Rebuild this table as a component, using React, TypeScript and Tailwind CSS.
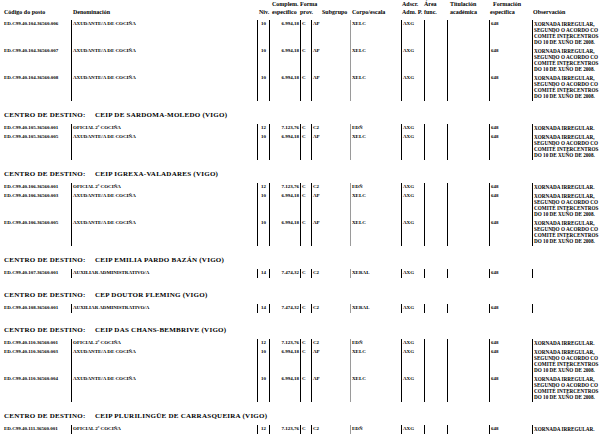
import React from 'react';

type Posto = {
  code: string;
  den: string;
  niv: string;
  comp: string;
  sub: string;
  corpo: string;
  obs: string[];
};

type Centro = {
  name?: string;
  rows: Posto[];
};

const OBS_LONG = [
  'XORNADA IRREGULAR,',
  'SEGUNDO O ACORDO CO',
  'COMITÉ INTERCENTROS',
  'DO 10 DE XUÑO DE 2008.',
];
const OBS_SHORT = ['XORNADA IRREGULAR.'];

const axudante = (code: string): Posto => ({
  code,
  den: 'AXUDANTE/A DE COCIÑA',
  niv: '10',
  comp: '6.994,18',
  sub: 'AP',
  corpo: 'XELC',
  obs: OBS_LONG,
});

const oficial = (code: string): Posto => ({
  code,
  den: 'OFICIAL 2ª COCIÑA',
  niv: '12',
  comp: '7.123,76',
  sub: 'C2',
  corpo: 'EDÑ',
  obs: OBS_SHORT,
});

const auxiliar = (code: string): Posto => ({
  code,
  den: 'AUXILIAR ADMINISTRATIVO/A',
  niv: '14',
  comp: '7.474,32',
  sub: 'C2',
  corpo: 'XERAL',
  obs: [],
});

const centros: Centro[] = [
  {
    rows: [
      axudante('ED.C99.40.104.36560.006'),
      axudante('ED.C99.40.104.36560.007'),
      axudante('ED.C99.40.104.36560.008'),
    ],
  },
  {
    name: 'CEIP DE SARDOMA-MOLEDO (VIGO)',
    rows: [oficial('ED.C99.40.105.36560.001'), axudante('ED.C99.40.105.36560.005')],
  },
  {
    name: 'CEIP IGREXA-VALADARES (VIGO)',
    rows: [
      oficial('ED.C99.40.106.36560.001'),
      axudante('ED.C99.40.106.36560.003'),
      axudante('ED.C99.40.106.36560.005'),
    ],
  },
  {
    name: 'CEIP EMILIA PARDO BAZÁN (VIGO)',
    rows: [auxiliar('ED.C99.40.107.36560.001')],
  },
  {
    name: 'CEP DOUTOR FLEMING (VIGO)',
    rows: [auxiliar('ED.C99.40.108.36560.001')],
  },
  {
    name: 'CEIP DAS CHANS-BEMBRIVE (VIGO)',
    rows: [
      oficial('ED.C99.40.110.36560.001'),
      axudante('ED.C99.40.110.36560.003'),
      axudante('ED.C99.40.110.36560.004'),
    ],
  },
  {
    name: 'CEIP PLURILINGÜE DE CARRASQUEIRA (VIGO)',
    rows: [oficial('ED.C99.40.111.36560.001')],
  },
];

function Header() {
  return (
    <div className="flex items-end text-[6px] leading-[8px] font-bold whitespace-nowrap h-[16px]">
      <div className="w-[73px] shrink-0 pl-[4px]">Código do posto</div>
      <div className="w-[186px] shrink-0">Denominación</div>
      <div className="w-[13px] shrink-0">Niv.</div>
      <div className="w-[28px] shrink-0">
        <div>Complem.</div>
        <div>específico</div>
      </div>
      <div className="w-[22px] shrink-0">
        <div>Forma</div>
        <div>prov.</div>
      </div>
      <div className="w-[30px] shrink-0">Subgrupo</div>
      <div className="w-[50px] shrink-0">Corpo/escala</div>
      <div className="w-[22px] shrink-0">
        <div>Adscr.</div>
        <div>Adm. P.</div>
      </div>
      <div className="w-[26px] shrink-0">
        <div>Área</div>
        <div>func.</div>
      </div>
      <div className="w-[40px] shrink-0">
        <div>Titulación</div>
        <div>académica</div>
      </div>
      <div className="w-[43px] shrink-0">
        <div className="pl-[3px]">Formación</div>
        <div>específica</div>
      </div>
      <div className="flex-1">Observación</div>
    </div>
  );
}

function Row({ p }: { p: Posto }) {
  const cell = 'shrink-0 pt-[1px] pb-[2px]';
  const line = 'border-l border-black';
  return (
    <div className="flex text-[5px] leading-[6px] font-bold whitespace-nowrap">
      <div className={`${cell} w-[71px] pl-[4px]`}>{p.code}</div>
      <div className={`${cell} ${line} w-[186px] pl-[1px]`}>{p.den}</div>
      <div className={`${cell} ${line} w-[12px] text-center`}>{p.niv}</div>
      <div className={`${cell} ${line} w-[31px] text-right pr-[1px]`}>{p.comp}</div>
      <div className={`${cell} ${line} w-[11px] pl-[1px]`}>C</div>
      <div className={`${cell} ${line} w-[39px] pl-[1px]`}>{p.sub}</div>
      <div className={`${cell} border-l-[1.5px] border-[#9a9a9a] w-[51px] pl-[1px]`}>{p.corpo}</div>
      <div className={`${cell} ${line} w-[23px] pl-[1px]`}>AXG</div>
      <div className={`${cell} ${line} w-[23px]`} />
      <div className={`${cell} ${line} w-[42px]`} />
      <div className={`${cell} ${line} w-[43px] pl-[1px]`}>648</div>
      <div className={`${cell} border-l-[1.5px] border-black flex-1 pl-[1px] text-[5.2px]`}>
        {p.obs.length ? p.obs.map((o) => <div key={o}>{o}</div>) : <div>&nbsp;</div>}
      </div>
    </div>
  );
}

export default function App() {
  return (
    <div className="w-[616px] h-[439px] overflow-hidden bg-white text-black font-['Liberation_Serif',serif]">
      <Header />
      <div className="mt-[4px]">
        {centros.map((c, i) => (
          <div key={i}>
            {c.name && (
              <div className="flex pt-[10px] pb-[5px] pl-[4px] text-[7px] leading-[8px] font-bold tracking-[0.25px] whitespace-nowrap">
                <span className="w-[91px] shrink-0">CENTRO DE DESTINO:</span>
                <span>{c.name}</span>
              </div>
            )}
            <div className={c.rows.length === 1 && !c.rows[0].obs.length ? 'mb-[3px]' : ''}>
              {c.rows.map((r) => (
                <Row key={r.code} p={r} />
              ))}
            </div>
          </div>
        ))}
      </div>
    </div>
  );
}
